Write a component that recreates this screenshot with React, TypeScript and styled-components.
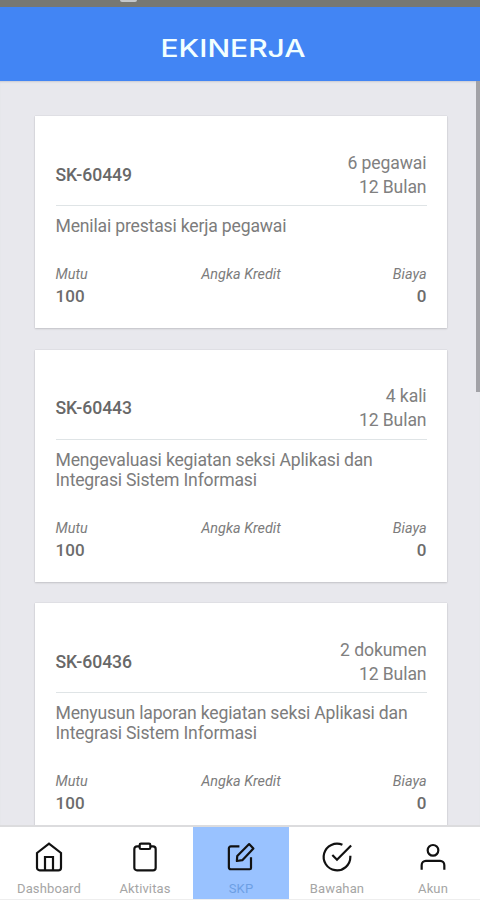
import React from 'react';
import styled, { createGlobalStyle } from 'styled-components';

const Global = createGlobalStyle`
  * { box-sizing: border-box; }
  body { margin: 0; overflow: hidden; font-family: Roboto, sans-serif; background: #e8e8ed; }
`;

const Screen = styled.div`
  display: flex;
  flex-direction: column;
  width: 480px;
  height: 900px;
  overflow: hidden;
  background: #e8e8ed;
`;

const StatusBar = styled.div`
  flex: none;
  height: 7px;
  padding-left: 120px;
  background: #777873;
`;

const StatusMark = styled.div`
  width: 17px;
  height: 2px;
  border-radius: 0 0 2px 2px;
  background: #c4c7ca;
`;

const Header = styled.header`
  flex: none;
  display: flex;
  align-items: center;
  justify-content: center;
  height: 74px;
  padding: 10px 13px 0 0;
  background: #4285f4;
`;

const Title = styled.h1`
  margin: 0;
  font: 500 24px/28px Inter, sans-serif;
  color: #f2ffff;
  white-space: nowrap;
  transform: scaleX(1.25);
`;

const Content = styled.main`
  flex: 1;
  min-height: 0;
  display: flex;
  align-items: flex-start;
  justify-content: space-between;
  overflow: hidden;
  box-shadow: inset 0 2px 2px -1px #c9cbd3;
`;

const List = styled.div`
  display: flex;
  flex-direction: column;
  gap: 21.7px;
  width: 447px;
  padding: 35px 0 0 34.5px;
`;

const ScrollThumb = styled.div`
  width: 4px;
  height: 311px;
  background: #a2a2a7;
`;

const CardBox = styled.article`
  flex: none;
  padding: 34px 20.5px 20px 21px;
  background: #fff;
  box-shadow: 0 1px 2px rgba(0, 0, 0, 0.14), 0 0 1px rgba(0, 0, 0, 0.16);
`;

const CardHead = styled.div`
  display: flex;
  align-items: center;
  justify-content: space-between;
  height: 56px;
  padding-bottom: 6px;
  border-bottom: 1px solid #dfe4e6;
`;

const Code = styled.strong`
  font-size: 17.6px;
  font-weight: 500;
  letter-spacing: -0.05px;
  color: #686868;
`;

const Target = styled.div`
  font-size: 17.6px;
  line-height: 24px;
  letter-spacing: -0.1px;
  text-align: right;
  color: #808080;
`;

const Description = styled.p<{ $lines: number }>`
  margin: 0;
  padding-top: 10px;
  height: ${(p) => 58 + (p.$lines - 1) * 20}px;
  font-size: 17.6px;
  line-height: 20px;
  letter-spacing: -0.18px;
  color: #7c7c7c;
  white-space: pre-line;
`;

const Metrics = styled.div`
  display: grid;
  grid-template-columns: 1fr 1fr 1fr;
  height: 44px;
`;

const Metric = styled.div<{ $align: string }>`
  text-align: ${(p) => p.$align};
  white-space: nowrap;
`;

const MetricLabel = styled.div`
  font-size: 14.4px;
  font-style: italic;
  line-height: 22px;
  color: #7c7c7c;
`;

const MetricValue = styled.div`
  font-size: 17px;
  font-weight: 500;
  line-height: 21px;
  letter-spacing: 0.15px;
  color: #6c6c6c;
`;

const Nav = styled.nav`
  flex: none;
  display: grid;
  grid-template-columns: repeat(5, 96px);
  height: 75px;
  padding-left: 1px;
  border-top: 2px solid #dcdcde;
  border-bottom: 1px solid #eeeeee;
  background: #fff;
`;

const Tab = styled.div<{ $active?: boolean }>`
  display: flex;
  flex-direction: column;
  align-items: center;
  padding-top: 14px;
  gap: 8px;
  font-size: 13px;
  line-height: 16px;
  letter-spacing: 0.12px;
  color: ${(p) => (p.$active ? '#6d9fe4' : '#a5a5a5')};
  background: ${(p) => (p.$active ? '#99c2ff' : '#fff')};
`;

const Icon = styled.svg`
  width: 32px;
  height: 32px;
  fill: none;
  stroke: #111;
  stroke-width: 1.65;
`;

const cards = [
  { code: 'SK-60449', target: '6 pegawai', text: 'Menilai prestasi kerja pegawai', lines: 1 },
  { code: 'SK-60443', target: '4 kali', text: 'Mengevaluasi kegiatan seksi Aplikasi dan\nIntegrasi Sistem Informasi', lines: 2 },
  { code: 'SK-60436', target: '2 dokumen', text: 'Menyusun laporan kegiatan seksi Aplikasi dan\nIntegrasi Sistem Informasi', lines: 2 },
];

const tabs = [
  {
    label: 'Dashboard',
    icon: <><path d="M3 9l9-7 9 7v11a2 2 0 0 1-2 2H5a2 2 0 0 1-2-2z" /><path d="M9 22V12h6v10" /></>,
  },
  {
    label: 'Aktivitas',
    icon: <><path d="M16 4h2a2 2 0 0 1 2 2v14a2 2 0 0 1-2 2H6a2 2 0 0 1-2-2V6a2 2 0 0 1 2-2h2" /><rect x="8" y="2" width="8" height="4" rx="1" /></>,
  },
  {
    label: 'SKP',
    icon: <><path d="M10.8 4H4.4a1.5 1.5 0 0 0-1.5 1.5v14.2A1.5 1.5 0 0 0 4.4 21.2H18.6a.9.9 0 0 0 .9-.9V12.2" /><path d="M18.1 2.3 21.3 5.6 13 14.4 8.9 15 9.2 11.2z" strokeLinejoin="round" /></>,
    active: true,
  },
  {
    label: 'Bawahan',
    icon: <><path d="M22 11.08V12a10 10 0 1 1-5.93-9.14" /><path d="M22.6 3.4 12 14.01l-3.5-3.5" /></>,
  },
  {
    label: 'Akun',
    icon: <><path d="M20.5 21.6v-3.5a3.2 3.2 0 0 0-3.2-3.2H6.7a3.2 3.2 0 0 0-3.2 3.2v3.5" /><circle cx="12" cy="7" r="4" /></>,
  },
];

export default function App() {
  return (
    <>
      <Global />
      <Screen>
        <StatusBar><StatusMark /></StatusBar>
        <Header><Title>EKINERJA</Title></Header>
        <Content>
          <List>
            {cards.map((c) => (
              <CardBox key={c.code}>
                <CardHead>
                  <Code>{c.code}</Code>
                  <Target>{c.target}<br />12 Bulan</Target>
                </CardHead>
                <Description $lines={c.lines}>{c.text}</Description>
                <Metrics>
                  <Metric $align="left"><MetricLabel>Mutu</MetricLabel><MetricValue>100</MetricValue></Metric>
                  <Metric $align="center"><MetricLabel>Angka Kredit</MetricLabel></Metric>
                  <Metric $align="right"><MetricLabel>Biaya</MetricLabel><MetricValue>0</MetricValue></Metric>
                </Metrics>
              </CardBox>
            ))}
          </List>
          <ScrollThumb />
        </Content>
        <Nav>
          {tabs.map((t) => (
            <Tab key={t.label} $active={t.active}>
              <Icon viewBox="0 0 24 24">{t.icon}</Icon>
              {t.label}
            </Tab>
          ))}
        </Nav>
      </Screen>
    </>
  );
}
